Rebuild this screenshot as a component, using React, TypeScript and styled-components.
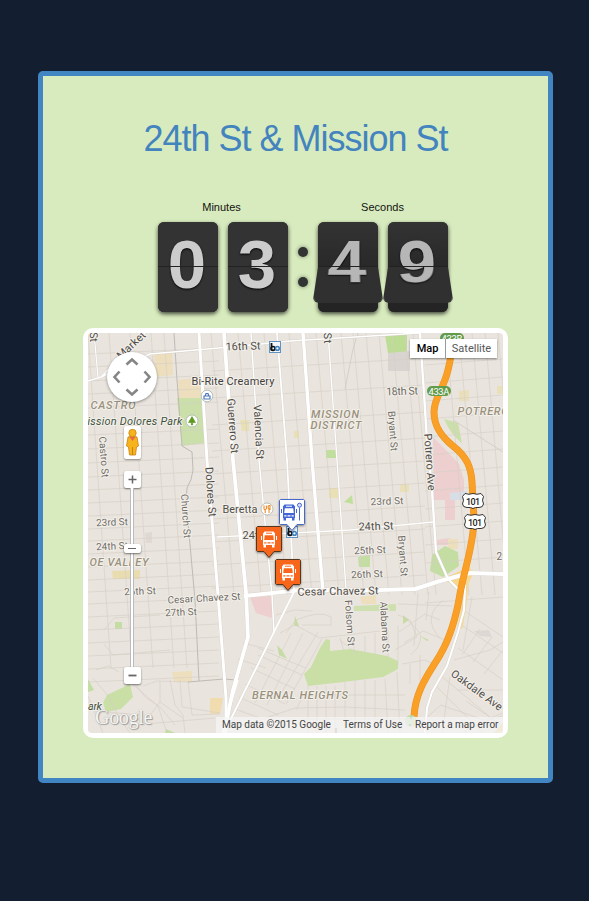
import React from 'react';
import styled, { createGlobalStyle, css } from 'styled-components';

const GlobalStyle = createGlobalStyle`
  *, *::before, *::after { box-sizing: border-box; }
  body {
    margin: 0;
    background: #131f31;
    font-family: 'Liberation Sans', Arial, sans-serif;
  }
`;

const Page = styled.main`
  min-height: 901px;
  padding: 71px 36px 0 38px;
`;

const Card = styled.section`
  height: 712px;
  display: flex;
  flex-direction: column;
  align-items: center;
  padding-top: 42px;
  background: #d8ebbe;
  border: 5px solid #4186c2;
  border-radius: 5px;
`;

const Title = styled.h1`
  margin: 0;
  height: 42px;
  font-size: 36px;
  line-height: 42px;
  font-weight: 400;
  letter-spacing: -1px;
  white-space: nowrap;
  color: #4384bf;
`;

const Clock = styled.div`
  display: flex;
  align-items: flex-end;
  gap: 10px;
  margin: 40px 0 0 15px;
`;

const Unit = styled.div`
  display: flex;
  flex-direction: column;
  align-items: center;
`;

const UnitLabel = styled.span<{ $shift: number }>`
  height: 22px;
  padding-right: ${(p) => p.$shift}px;
  font-size: 11px;
  line-height: 14px;
  color: #111;
`;

const Digits = styled.div`
  display: flex;
  gap: 10px;
`;

const Dots = styled.div`
  display: flex;
  flex-direction: column;
  justify-content: center;
  gap: 20px;
  height: 90px;
`;

const Dot = styled.i`
  width: 10px;
  height: 10px;
  border-radius: 50%;
  background: #323434;
  box-shadow: 0 0 4px rgba(0, 0, 0, 0.45);
`;

const FlipCard = styled.div`
  width: 60px;
  height: 90px;
  border-radius: 6px;
  background: #333;
  box-shadow: 0 2px 4px rgba(0, 0, 0, 0.7);
`;

const Half = styled.div<{ $bottom?: boolean; $falling?: boolean }>`
  height: 45px;
  overflow: hidden;
  background: #333;
  border-radius: ${(p) => (p.$bottom ? '0 0 6px 6px' : '6px 6px 0 0')};
  ${(p) => !p.$bottom && css`border-bottom: 1px solid #222;`}
  ${(p) =>
    p.$falling &&
    !p.$bottom &&
    css`background: linear-gradient(#333, #292929);`}
  ${(p) =>
    p.$falling &&
    p.$bottom &&
    css`
      transform-origin: 50% 0;
      transform: rotateX(47.5deg);
      background: #303030;
    `}
`;

const FlapStage = styled.div`
  height: 45px;
  perspective: 215px;
  perspective-origin: 50% 0;
`;

const LowerWell = styled.div<{ $falling?: boolean }>`
  height: 45px;
  border-radius: 0 0 6px 6px;
  background: ${(p) => (p.$falling ? '#242424' : '#333')};
`;

const Figure = styled.div<{ $bottom?: boolean; $dim?: boolean }>`
  height: 90px;
  margin-top: ${(p) => (p.$bottom ? '-45px' : '0')};
  font-size: 69px;
  line-height: 86px;
  font-weight: 700;
  text-align: center;
  text-indent: -2px;
  color: ${(p) => (p.$dim ? '#b6b6b6' : '#ccc')};
  text-shadow: 0 1px 2px #000;
`;

const MapFrame = styled.div`
  position: relative;
  width: 425px;
  height: 410px;
  margin-top: 16px;
  border: 5px solid #fff;
  border-radius: 10px;
  background: #e9e4dd;
  font-family: Roboto, sans-serif;
`;

const MapCanvas = styled.svg`
  display: block;
  width: 415px;
  height: 400px;
  border-radius: 4px;
`;

const NavControls = styled.div`
  position: absolute;
  left: 19px;
  top: 19px;
  display: flex;
  flex-direction: column;
  align-items: center;
  width: 50px;
`;

const PanWheel = styled.div`
  width: 50px;
  height: 50px;
  border-radius: 50%;
  background: #fff;
  box-shadow: 0 1px 3px rgba(0, 0, 0, 0.4);
`;

const Pegman = styled.div`
  display: grid;
  place-items: center;
  width: 17px;
  height: 33px;
  margin: 24px 0 12px;
  border-radius: 2px;
  background: #fff;
  box-shadow: 0 1px 2px rgba(0, 0, 0, 0.4);
`;

const ZoomKey = styled.button`
  display: grid;
  place-items: center;
  width: 17px;
  height: 17px;
  padding: 0;
  border: 0;
  border-radius: 2px;
  background: #fff;
  box-shadow: 0 1px 2px rgba(0, 0, 0, 0.5);
`;

const Rail = styled.div`
  display: flex;
  justify-content: center;
  width: 4px;
  height: 179px;
  padding-top: 56px;
  background: #fff;
  border: solid #bbb;
  border-width: 0 1px;
`;

const Thumb = styled.div`
  flex: none;
  display: grid;
  place-items: center;
  width: 17px;
  height: 9px;
  border-radius: 2px;
  background: #fff;
  box-shadow: 0 1px 2px rgba(0, 0, 0, 0.5);
`;

const ThumbLine = styled.i`
  width: 8px;
  height: 1px;
  background: #666;
`;

const TypeSwitch = styled.div`
  position: absolute;
  top: 6px;
  right: 6px;
  display: flex;
  height: 19px;
  background: #fff;
  box-shadow: 0 1px 2px rgba(0, 0, 0, 0.45);
`;

const TypeButton = styled.button<{ $active?: boolean; $w: number }>`
  width: ${(p) => p.$w}px;
  padding: 0;
  border: 0;
  border-left: ${(p) => (p.$active ? '0' : '1px solid #999')};
  background: transparent;
  font: ${(p) => (p.$active ? 500 : 400)} 11px/19px Roboto, sans-serif;
  color: ${(p) => (p.$active ? '#000' : '#565656')};
`;

const Logo = styled.span`
  position: absolute;
  left: 7px;
  bottom: 4px;
  font: 20px/24px 'Liberation Serif', serif;
  letter-spacing: -0.3px;
  color: #f6f5f3;
  text-shadow: 0 0 1px #999, 1px 1px 1px #999;
`;

const Attribution = styled.div`
  position: absolute;
  right: 0;
  bottom: 0;
  display: flex;
  width: 287px;
  height: 16px;
  padding-left: 6px;
  background: rgba(245, 245, 245, 0.72);
  font-size: 10px;
  line-height: 16px;
  white-space: nowrap;
  color: #444;
`;

const Notice = styled.span<{ $w: number }>`
  width: ${(p) => p.$w}px;
`;

const minorColumns = [
  88, 109, 130, 151, 164, 211, 238, 264, 289, 316, 341, 353, 366, 379,
  392, 405, 413, 446, 459, 472, 485, 498,
];
const westRows = [
  354, 367, 381, 394, 408, 435, 449, 463, 477, 490, 503, 516, 529, 541,
  554, 567, 580, 592, 604, 617, 630, 643, 656, 669, 682,
];
const missionRows = [371, 398, 425, 451, 474, 496, 519, 542, 565, 588];
const eastRows = [362, 380, 398, 416, 434, 452, 470, 488, 506, 524, 542, 560, 600];

const line = (x1: number, y1: number, x2: number, y2: number) =>
  `M${x1} ${y1}L${x2} ${y2}`;

const gridPath = [
  ...minorColumns.map((x) => line(x, 333, x + 23, x < 180 ? 668 : 595)),
  ...westRows.map((y) => line(88, y, 219, y - 6)),
  ...missionRows.map((y) => line(212, y, 425, y - 13)),
  ...eastRows.map((y) => line(425, y + 3, 503, y - 3)),
].join('');

const bernalPath = `
  M243 643L274 651M238 659L266 668M258 655L302 675M251 668L295 689M245 684L285 704M239 697L278 715M235 709L260 718
  M255 703L280 655L291 633M267 705L303 633M277 700L318 632M286 704L322 639M296 710L306 690M258 648L286 660L306 668
  M286 633L296 620Q320 610 331 617V625L302 625M276 615L295 610L312 611M280 633L295 625L320 638L380 631
  M308 686V733M317 686V733M326 686V733M335 686V733M345 682V733M355 680V733M365 680V733M375 680V733M385 679L388 733M397 672L400 733
  M260 720L295 708L345 707L405 710M300 719H405M306 695H405M340 638L344 651M354 638V652M365 636V653M375 633V655M388 630V657M398 626V665
  M358 655L340 640M395 650L417 637L410 620L398 615M399 632L425 614L440 620M404 643L423 631L445 640M402 664L425 660L436 665
  M398 604L452 606M418 593L414 646M429 592L426 620M411 655Q426 641 418 630L405 618M443 600Q421 618 440 638
  M454 660L490 650L503 642M463 610L503 637M460 624L503 653M458 648L503 680M440 675L503 728M437 687L483 733M450 677L442 733
  M472 597L463 650M480 629L462 655M492 637L473 662M503 650L484 674M463 733Q485 719 503 716M466 701L503 726M457 690L503 690
  M424 720L441 705L484 720L503 713M420 681V655M410 684V664`;

const noePath = `
  M93 678Q103 690 110 698L118 716L130 733M133 681L145 697L160 707L175 725M143 686L157 681L188 682M160 681V702L151 714
  M170 680L175 705L183 715L185 733M180 680L182 707L220 713M188 681L192 715L220 714M160 702L183 718M95 711L130 714L145 724L215 718
  M104 630L114 618L160 615M104 644L113 655L170 650M96 670L108 666L119 672M88 696L103 733M130 682L158 706L167 733`;

const majorPaths: { d: string; w: number }[] = [
  { d: 'M199 333L207 460L218 595L226 698V733', w: 3 },
  { d: 'M224 333L233 460L246 592L248 637L233 690L224 733', w: 3.8 },
  { d: 'M251 333L259 460L272 595L274 632', w: 1.5 },
  { d: 'M277 333L287 460L294 592', w: 1.8 },
  { d: 'M294 592L274 632L224 733', w: 2 },
  { d: 'M303 333L312 460L323 592', w: 3.4 },
  { d: 'M328 333L337 460L346 589', w: 1.4 },
  { d: 'M420 333L427 440L432 490L436 552L448 579L459 590', w: 2.4 },
  { d: 'M88 381L101 377L117 361L145 333M101 377L150 354L230 347L290 341L420 333', w: 1.6 },
  { d: 'M217 537L350 530L433 522', w: 1.5 },
  { d: 'M244 596L300 590L380 590L415 589L440 581L470 573L503 574', w: 4 },
  { d: 'M94 333L98 377', w: 1.2 },
  { d: 'M465 585L464 610L458 632L447 666L432 692L427 708L425 733', w: 2.2 },
];

const areas: { d: string; fill: string }[] = [
  { d: 'M177 398L203 397L205 443L182 446Z', fill: '#cadfaa' },
  { d: 'M178 380L203 377V398H179Z', fill: '#eddfbd' },
  { d: 'M154 354L172 352L173 375L155 377Z', fill: '#eddfbd' },
  { d: 'M385 335H407V353H388Z', fill: '#bddc94' },
  { d: 'M388 353L410 351V371H388Z', fill: '#d9d4cf' },
  { d: 'M326 450H336V458H326Z', fill: '#c0df9c' },
  { d: 'M240 420H249V431H242ZM294 431H299V438H294ZM329 488H338V498H329Z', fill: '#e9e1b5' },
  { d: 'M444 419L458 423L462 443Q451 435 444 419Z', fill: '#cadfaa' },
  { d: 'M459 391L469 390V401H459ZM497 386H503V394H497ZM400 484H409V492H400Z', fill: '#eadfbb' },
  { d: 'M433 437Q448 452 459 464L464 480V500H455V520H445V500H434Z', fill: '#eccfce' },
  { d: 'M450 493L467 491V500H450Z', fill: '#d8dee6' },
  { d: 'M437 540L450 538V545H437Z', fill: '#eccfce' },
  { d: 'M448 539L458 539V549H448Z', fill: '#eddfbd' },
  { d: 'M432 555L445 546L458 552L459 566L443 577L430 571Z', fill: '#c4dda2' },
  { d: 'M344 502L352 495L353 504Z', fill: '#c0df9c' },
  { d: 'M358 557L370 555V567H359Z', fill: '#c4dda2' },
  { d: 'M250 597L272 596V618L256 613Z', fill: '#eccfce' },
  { d: 'M354 606L396 604V611H354Z', fill: '#cfe0b0' },
  { d: 'M360 597L376 595V604H362Z', fill: '#eddfbd' },
  { d: 'M320 648L326 639L330 640V651L350 649L387 656L398 661V669L383 677L343 682L308 686L304 674L311 667Z', fill: '#c9dfa6' },
  { d: 'M277 645L282 650L287 659L279 655ZM295 616L299 626H294Z', fill: '#c4dda2' },
  { d: 'M107 695L130 684L133 697L121 709L106 712L103 703Z', fill: '#c9dfa6' },
  { d: 'M115 622H122V629H115ZM88 679L94 690L88 692ZM166 729L175 733H165Z', fill: '#c4dda2' },
  { d: 'M172 672L192 671V682H174Z', fill: '#eddfbd' },
  { d: 'M210 698L223 698L220 714H210Z', fill: '#f0dcae' },
  { d: 'M112 571L140 570V579H113Z', fill: '#e9dcae' },
  { d: 'M145 533L152 532V543H146Z', fill: '#e0d9d3' },
  { d: 'M403 615L409 620L403 624ZM420 636L429 640L427 641Z', fill: '#c4dda2' },
  { d: 'M474 631L489 630L492 637L480 636Z', fill: '#ddd8d4' },
  { d: 'M494 733L503 722V733Z', fill: '#ead09a' },
];

type LabelSpec = {
  t: string;
  x: number;
  y: number;
  w: number;
  r?: number;
  s?: number;
  c?: string;
  i?: boolean;
  b?: boolean;
};

const minorInk = '#6f6b66';
const mainInk = '#504d49';
const districtInk = '#9a907e';

const labels: LabelSpec[] = [
  { t: 'St', x: 94, y: 337, w: 10, r: 88, c: mainInk },
  { t: 'St', x: 328, y: 338, w: 11, r: 88, c: mainInk },
  { t: 'Market', x: 131, y: 345, w: 35, r: -43, c: mainInk },
  { t: '16th St', x: 243, y: 346, w: 35, r: -2, c: mainInk },
  { t: 'Bi-Rite Creamery', x: 233, y: 381, w: 83, c: '#3f3d3c' },
  { t: 'CASTRO', x: 113, y: 405, w: 45, i: true, b: true, c: districtInk },
  { t: 'ission Dolores Park', x: 135, y: 421, w: 95, i: true, c: '#3e5140' },
  { t: 'Castro St', x: 104, y: 457, w: 41, r: 86, s: 10 },
  { t: 'Guerrero St', x: 233, y: 426, w: 55, r: 86, c: mainInk },
  { t: 'Valencia St', x: 259, y: 432, w: 55, r: 87, c: mainInk },
  { t: 'Dolores St', x: 211, y: 492, w: 50, r: 86, c: mainInk },
  { t: 'Church St', x: 186, y: 516, w: 44, r: 86, s: 10 },
  { t: 'MISSION', x: 335, y: 414, w: 48, i: true, b: true, c: districtInk },
  { t: 'DISTRICT', x: 336, y: 425, w: 51, i: true, b: true, c: districtInk },
  { t: '18th St', x: 402, y: 391, w: 32, r: -2 },
  { t: 'Bryant St', x: 393, y: 431, w: 40, r: 86, s: 10 },
  { t: 'Potrero Ave', x: 430, y: 462, w: 57, r: 86, c: mainInk },
  { t: 'POTRERO', x: 483, y: 411, w: 51, i: true, b: true, c: districtInk },
  { t: 'Beretta', x: 240, y: 509, w: 35, c: mainInk },
  { t: '23rd St', x: 112, y: 522, w: 32, r: -2, s: 10 },
  { t: '24th St', x: 112, y: 546, w: 32, r: -2, s: 10 },
  { t: 'OE VALLEY', x: 119, y: 562, w: 59, i: true, b: true, c: districtInk },
  { t: '26th St', x: 140, y: 591, w: 32, r: -2, s: 10 },
  { t: 'Cesar Chavez St', x: 204, y: 598, w: 73, r: -3, s: 10 },
  { t: '27th St', x: 181, y: 612, w: 32, r: -2, s: 10 },
  { t: '24th St', x: 260, y: 535, w: 35, c: mainInk },
  { t: '24th St', x: 376, y: 526, w: 35, r: -2, c: mainInk },
  { t: '23rd St', x: 387, y: 501, w: 33, r: -2, s: 10 },
  { t: '25th St', x: 370, y: 550, w: 32, r: -2, s: 10 },
  { t: '26th St', x: 367, y: 574, w: 32, r: -2, s: 10 },
  { t: 'Bryant St', x: 403, y: 556, w: 41, r: 86, s: 10 },
  { t: 'Cesar Chavez St', x: 338, y: 591, w: 81, r: -1, c: mainInk },
  { t: '29th', x: 507, y: 556, w: 21, s: 10 },
  { t: 'Folsom St', x: 350, y: 623, w: 46, r: 86, s: 10 },
  { t: 'Alabama St', x: 385, y: 627, w: 51, r: 87, s: 10 },
  { t: 'Oakdale Ave', x: 477, y: 690, w: 61, r: 36, c: mainInk },
  { t: 'BERNAL HEIGHTS', x: 300, y: 695, w: 96, i: true, b: true, c: districtInk },
  { t: 'ark', x: 95, y: 706, w: 14, i: true, c: '#3e5140' },
];

const Label = ({ t, x, y, w, r = 0, s = 11, c = minorInk, i, b }: LabelSpec) => (
  <text
    x={x}
    y={y + s * 0.36}
    textLength={w}
    transform={`rotate(${r} ${x} ${y})`}
    textAnchor="middle"
    fontSize={s}
    fontStyle={i ? 'italic' : 'normal'}
    fontWeight={b ? 500 : 400}
    fill={c}
    stroke="#f3f0ea"
    strokeWidth={2}
    strokeLinejoin="round"
    paintOrder="stroke"
  >
    {t}
  </text>
);

const Shield = ({ x, y }: { x: number; y: number }) => (
  <g transform={`translate(${x} ${y})`}>
    <path
      d="M-8 -7.500Q-4 -6 0 -7.500Q4 -6 8 -7.500L10.500 -4.500Q8.500 -1 10.500 3Q10 6.500 6 6.500Q2 6 0 7.500Q-2 6 -6 6.500Q-10 6.500 -10.500 3Q-8.500 -1 -10.500 -4.500Z"
      fill="#fff"
      stroke="#333"
      strokeWidth="1"
    />
    <text y="3.5" textAnchor="middle" fontSize="9" textLength="14" fontWeight="500" fill="#222">101</text>
  </g>
);

const Exit = ({ x, y, t }: { x: number; y: number; t: string }) => (
  <g>
    <rect x={x - 12} y={y - 5} width="24" height="10" rx="5" fill="#639b4d" />
    <text x={x} y={y + 3.5} textAnchor="middle" fontSize="9.5" textLength="21" fill="#fff">{t}</text>
  </g>
);

const Bart = ({ x, y }: { x: number; y: number }) => (
  <g>
    <rect x={x - 5.5} y={y - 5.5} width="11" height="11" fill="#f4f8fc" stroke="#6292c2" />
    <path d="M-3.500 -4V3.500" transform={`translate(${x} ${y})`} stroke="#111" strokeWidth="1.800" />
    <circle cx={x - 2} cy={y + 1.4} r="1.9" fill="none" stroke="#111" strokeWidth="1.700" />
    <circle cx={x + 2.4} cy={y + 1.4} r="1.9" fill="none" stroke="#3f7fb9" strokeWidth="1.500" />
  </g>
);

const BusPin = ({ x, y, stop }: { x: number; y: number; stop?: boolean }) => {
  const ink = stop ? '#4365d6' : '#fff';
  const paper = stop ? '#fff' : '#f8661c';
  return (
    <g transform={`translate(${x} ${y})`}>
      <path
        d="M1.5 .5H24.5L25.5 1.5V24.5L24.5 25.5H18L13 31.5L8 25.5H1.5L.5 24.5V1.5Z"
        fill={paper}
        stroke={stop ? '#4667cc' : '#54351f'}
        filter="url(#pinShadow)"
      />
      <g transform={stop ? 'translate(-3 0)' : undefined}>
        <path d="M8.500 5.500H17.500L19 7.500V19H7V7.500Z" fill={ink} />
        <rect x="10" y="6.700" width="6" height="1" fill={paper} />
        <path d="M8.800 9.200H17.200L17.800 14H8.200Z" fill={paper} />
        <path d="M8.200 16.200H10.500V17.400H8.200ZM15.500 16.200H17.800V17.400H15.500ZM11.500 16.200H14.500V17.400H11.500Z" fill={paper} />
        <path d="M7.500 18.500H10V21.500H7.500ZM16 18.500H18.500V21.500H16ZM5 10H6V14H5ZM20 10H21V14H20Z" fill={ink} />
      </g>
      {stop && (
        <>
          <path d="M20.5 8.5V21.5" stroke={ink} strokeWidth="1" />
          <circle cx="20.5" cy="6.2" r="2" fill="#d8e0fa" stroke={ink} />
        </>
      )}
    </g>
  );
};

const highway =
  'M452 333Q452 356 448 370C444 388 434 398 434 412C434 428 443 438 453 446C467 457 471 467 472 482L474 520C473 548 464 570 460 594C456 618 450 638 440 655C430 672 415 690 414 717';

const CityMap = () => (
  <MapCanvas viewBox="88 333 415 400">
    <defs>
      <filter id="pinShadow" x="-30%" y="-30%" width="160%" height="160%">
        <feDropShadow dx="0" dy="1" stdDeviation="1.2" floodOpacity=".45" />
      </filter>
    </defs>
    <rect x="88" y="333" width="415" height="400" fill="#e9e4dd" />
    {areas.map((a) => (
      <path key={a.d} d={a.d} fill={a.fill} />
    ))}
    <g fill="none" stroke="#d5cfc6" strokeWidth="0.65">
      <path d={gridPath} />
      <path d={bernalPath} />
      <path d={noePath} />
    </g>
    <path
      d="M174 333L177 380L182 446L192 452L193 470Q192 480 187 488L186 500L195 600L199 681M188 682L224 679L236 680"
      fill="none"
      stroke="#bebab5"
      strokeWidth="1"
    />
    <path
      d="M345 389L353 349L358 333M453 420L503 452"
      fill="none"
      stroke="#cfcac3"
      strokeWidth="0.800"
    />
    <path d="M438 579Q455 575 469 566L473 574L463 595L450 583Z" fill="#f8d78a" />
    <path d="M467 575L464 605L460 628" fill="none" stroke="#f6d998" strokeWidth="5" />
    <g fill="none" stroke="#d5d0c9">
      {majorPaths.map((m) => (
        <path key={m.d} d={m.d} strokeWidth={m.w + 0.7} />
      ))}
    </g>
    <g fill="none" stroke="#fff" strokeLinejoin="round">
      {majorPaths.map((m) => (
        <path key={m.d} d={m.d} strokeWidth={m.w} />
      ))}
    </g>
    <path d="M222 733L238 680" fill="none" stroke="#fff" strokeWidth="1.4" />
    <path d={highway} fill="none" stroke="#e99527" strokeWidth="7" />
    <path d={highway} fill="none" stroke="#fba026" strokeWidth="5.800" />
    <circle cx="411" cy="721" r="6" fill="#bcd9ae" />
    {labels.map((l) => (
      <Label key={`${l.t}${l.x}`} {...l} />
    ))}
    <Exit x={439} y={391} t="433A" />
    <Exit x={452} y={338} t="433B" />
    <Shield x={473} y={501} />
    <Shield x={475} y={522} />
    <Bart x={275} y={347} />
    <Bart x={292} y={532} />
    <g stroke="#a9b2ac" strokeWidth=".8" fill="#fff">
      <circle cx="192" cy="421" r="6" />
      <circle cx="207" cy="396" r="5.8" />
      <circle cx="267" cy="509" r="6" />
    </g>
    <path d="M192 416.5L195.5 422.5H192.7V425H191.3V422.5H188.5Z" fill="#5d9b1e" stroke="#5d9b1e" strokeWidth=".6" />
    <path d="M204 399V396H210V399ZM205.2 396L206 393.5H208L208.8 396" fill="none" stroke="#4b79b8" strokeWidth="1.2" />
    <path d="M264 505.5V508.5Q264 510 265.2 510V513M266.4 505.5V508.5L265.2 510M269 513V509Q267.7 508 268.3 506L270 505.5V510" fill="none" stroke="#ee8a25" strokeWidth="1.1" />
    <BusPin x={279} y={499} stop />
    <BusPin x={256} y={526} />
    <BusPin x={275} y={559} />
    <path d="M336 733V728M410 726V724M411 719V717" stroke="#66625e" />
  </MapCanvas>
);

const FlipDigit = ({ value, falling }: { value: string; falling?: boolean }) => (
  <FlipCard>
    <Half $falling={falling}>
      <Figure $dim={falling}>{value}</Figure>
    </Half>
    <LowerWell $falling={falling}>
      <FlapStage>
        <Half $bottom $falling={falling}>
          <Figure $bottom $dim={falling} aria-hidden>{value}</Figure>
        </Half>
      </FlapStage>
    </LowerWell>
  </FlipCard>
);

export default function App() {
  return (
    <>
      <GlobalStyle />
      <Page>
        <Card>
          <Title>24th St &amp; Mission St</Title>
          <Clock>
            <Unit>
              <UnitLabel $shift={3}>Minutes</UnitLabel>
              <Digits>
                <FlipDigit value="0" />
                <FlipDigit value="3" />
              </Digits>
            </Unit>
            <Dots>
              <Dot />
              <Dot />
            </Dots>
            <Unit>
              <UnitLabel $shift={1}>Seconds</UnitLabel>
              <Digits>
                <FlipDigit value="4" falling />
                <FlipDigit value="9" falling />
              </Digits>
            </Unit>
          </Clock>
          <MapFrame>
            <CityMap />
            <NavControls>
              <PanWheel>
                <svg width="50" height="50" viewBox="0 0 50 50" fill="none" stroke="#858585" strokeWidth="2.600">
                  <path d="M19.5 12.5L25 7.5L30.5 12.5M19.5 37.5L25 42.5L30.5 37.5M12.5 19.5L7.5 25L12.5 30.5M37.5 19.5L42.5 25L37.5 30.5" />
                </svg>
              </PanWheel>
              <Pegman>
                <svg width="15" height="29" viewBox="0 0 15 29">
                  <path d="M3 9Q7.500 7 12 9L13.500 18L11.500 19L10.500 27H4.500L3.500 19L1.500 18Z" fill="#f7b31b" stroke="#c98212" strokeWidth=".8" />
                  <circle cx="7.500" cy="5" r="3.700" fill="#f7b31b" stroke="#c98212" strokeWidth=".8" />
                  <path d="M4.500 9H10.500L7.500 13Z" fill="#e66a4c" />
                  <path d="M7.500 19V27" stroke="#c98212" />
                </svg>
              </Pegman>
              <ZoomKey aria-label="Zoom in">
                <svg width="9" height="9" viewBox="0 0 9 9">
                  <path d="M.5 4.500H8.500M4.500 .5V8.500" stroke="#666" strokeWidth="1.500" />
                </svg>
              </ZoomKey>
              <Rail>
                <Thumb>
                  <ThumbLine />
                </Thumb>
              </Rail>
              <ZoomKey aria-label="Zoom out">
                <svg width="9" height="9" viewBox="0 0 9 9">
                  <path d="M.5 4.500H8.500" stroke="#666" strokeWidth="1.800" />
                </svg>
              </ZoomKey>
            </NavControls>
            <TypeSwitch>
              <TypeButton $active $w={35}>Map</TypeButton>
              <TypeButton $w={52}>Satellite</TypeButton>
            </TypeSwitch>
            <Logo>Google</Logo>
            <Attribution>
              <Notice $w={121}>Map data ©2015 Google</Notice>
              <Notice $w={72}>Terms of Use</Notice>
              <Notice $w={84}>Report a map error</Notice>
            </Attribution>
          </MapFrame>
        </Card>
      </Page>
    </>
  );
}
